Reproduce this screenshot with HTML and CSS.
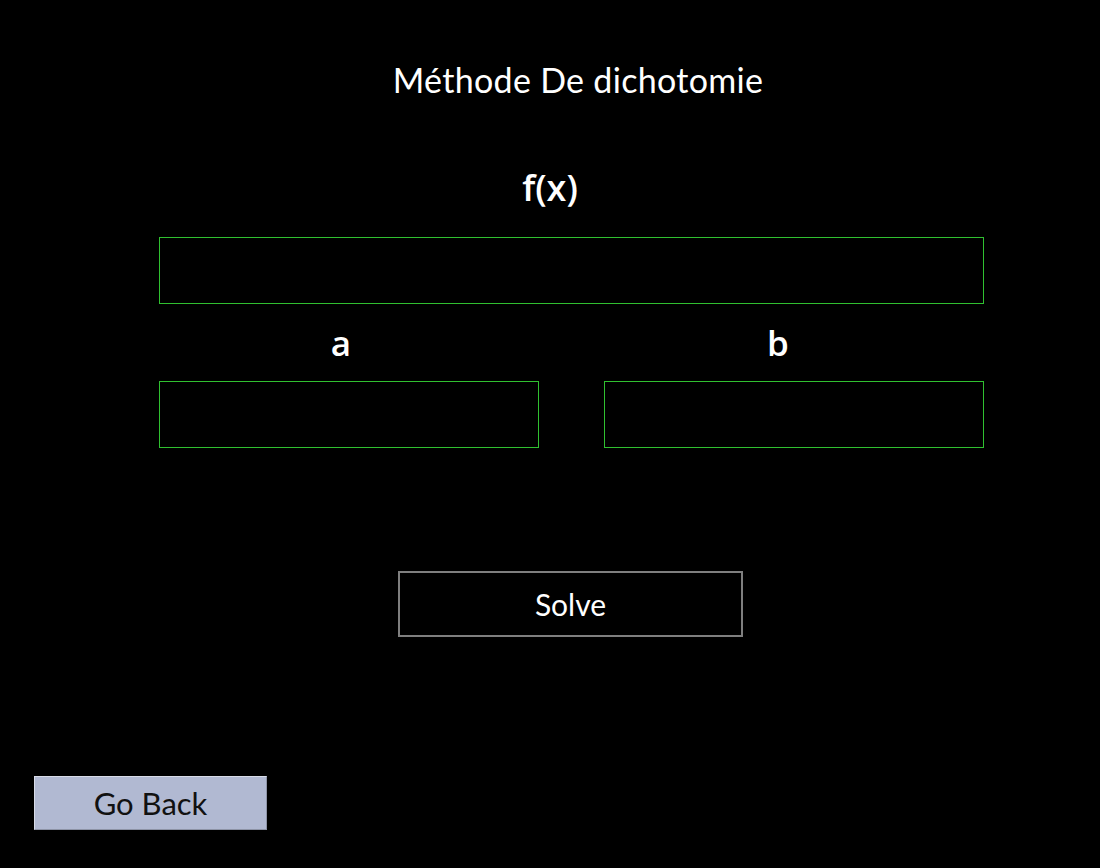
FILE: index.html
```html
<!DOCTYPE html>
<html lang="fr">
<head>
<meta charset="utf-8">
<title>Méthode De dichotomie</title>
<link rel="stylesheet" href="styles.css">
</head>
<body>
<div class="page">
  <main class="form">
    <h1 class="title">Méthode De dichotomie</h1>
    <label class="label label-fx" for="fx">f(x)</label>
    <div class="field field-fx" id="fx"></div>
    <div class="pair">
      <div class="col">
        <label class="label label-a" for="a">a</label>
        <div class="field" id="a"></div>
      </div>
      <div class="col">
        <label class="label label-b" for="b">b</label>
        <div class="field" id="b"></div>
      </div>
    </div>
    <div class="actions">
      <button class="solve" type="button">Solve</button>
    </div>
  </main>
  <footer class="footer">
    <button class="back" type="button">Go Back</button>
  </footer>
</div>
</body>
</html>
```
FILE: styles.css
```css
html, body {
  margin: 0;
  padding: 0;
  background: #000;
  height: 100%;
}
.page {
  height: 868px;
  display: flex;
  flex-direction: column;
  font-family: Lato, "Open Sans", sans-serif;
  color: #fff;
}
.form {
  width: 825px;
  margin-left: 159px;
  display: flex;
  flex-direction: column;
}
.title {
  margin: 60px 0 0 0;
  padding-left: 13px;
  text-align: center;
  font-size: 34px;
  line-height: 40px;
  font-weight: 400;
  letter-spacing: 0.3px;
}
.label {
  display: block;
  text-align: center;
  font-family: "Open Sans", sans-serif;
  font-weight: 600;
  font-size: 35px;
  line-height: 40px;
  color: #fff;
}
.label-fx {
  margin-top: 66px;
  padding-right: 43px;
  font-size: 36px;
  line-height: 44px;
}
.label-a {
  padding-right: 16px;
}
.label-b {
  padding-right: 32px;
}
.field {
  box-sizing: border-box;
  width: 100%;
  height: 67px;
  background: #000;
  border: 1px solid #30c030;
}
.field-fx {
  margin-top: 27px;
}
.pair {
  display: flex;
  gap: 65px;
  margin-top: 19px;
}
.col {
  width: 380px;
  display: flex;
  flex-direction: column;
}
.col .field {
  margin-top: 18px;
}
.actions {
  display: flex;
  margin-top: 123px;
}
.solve {
  margin-left: 239px;
  width: 345px;
  height: 66px;
  box-sizing: border-box;
  background: #000;
  border: 2px solid #7f7f7f;
  color: #fff;
  font-family: Lato, "Open Sans", sans-serif;
  font-size: 30px;
  padding: 0;
}
.footer {
  margin-top: auto;
  margin-bottom: 38px;
  padding-left: 34px;
}
.back {
  width: 233px;
  height: 54px;
  box-sizing: border-box;
  background: #b1b9d2;
  border: 1px solid #d8dce8;
  border-right-color: #8d93a6;
  border-bottom-color: #8d93a6;
  color: #111;
  font-family: Lato, "Open Sans", sans-serif;
  font-size: 31px;
  padding: 0;
}
```
